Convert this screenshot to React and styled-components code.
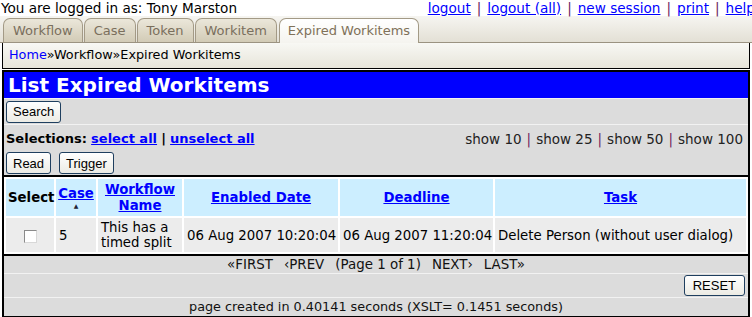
import styled, { createGlobalStyle } from 'styled-components'

const GlobalStyle = createGlobalStyle`
  html, body {
    margin: 0;
    padding: 0;
    background: #ffffff;
  }
  body {
    font-family: "DejaVu Sans", Verdana, sans-serif;
    font-size: 13px;
    color: #000;
  }
`

const topLinks = ['logout', 'logout (all)', 'new session', 'print', 'help']
const tabs = ['Workflow', 'Case', 'Token', 'Workitem', 'Expired Workitems']
const pageSizes = [10, 25, 50, 100]

const columns = [
  { label: 'Case', width: 40, sort: true },
  { label: 'Workflow Name', width: 84, lines: ['Workflow', 'Name'] },
  { label: 'Enabled Date', width: 154 },
  { label: 'Deadline', width: 153 },
  { label: 'Task' }
]

const App = () => {
  return (
    <>
      <GlobalStyle />
      <Page>
        <TopBar>
          <span>You are logged in as: Tony Marston</span>
          <TopLinks>
            {topLinks.map((l, k) => (
              <span key={k}>
                {k > 0 && <Sep>|</Sep>}
                <A href="#">{l}</A>
              </span>
            ))}
          </TopLinks>
        </TopBar>

        <TabBar>
          {tabs.map((t, k) => (
            <Tab key={k} $active={k === tabs.length - 1}>{t}</Tab>
          ))}
        </TabBar>

        <Breadcrumb>
          <A href="#" $plain>Home</A>»Workflow»Expired Workitems
        </Breadcrumb>

        <Panel>
          <Title>List Expired Workitems</Title>

          <Row>
            <Button>Search</Button>
          </Row>

          <Row $between>
            <Selections>
              <b>Selections:</b> <BoldLink href="#">select all</BoldLink> <b>|</b> <BoldLink href="#">unselect all</BoldLink>
            </Selections>
            <ShowLinks>
              {pageSizes.map((n, k) => (
                <span key={k}>
                  {k > 0 && <Sep>|</Sep>}
                  show {n}
                </span>
              ))}
            </ShowLinks>
          </Row>

          <ActionRow>
            <Button>Read</Button>
            <Button>Trigger</Button>
          </ActionRow>

          <Table>
            <colgroup>
              <col style={{ width: 48 }} />
              {columns.map((c, k) => (
                <col key={k} style={c.width ? { width: c.width } : undefined} />
              ))}
            </colgroup>
            <thead>
              <tr>
                <Th>Select</Th>
                {columns.map((c, k) => (
                  <Th key={k}>
                    <HeadLink href="#">
                      {c.lines ? (
                        <>{c.lines[0]}<br />{c.lines[1]}</>
                      ) : c.label}
                    </HeadLink>
                    {c.sort && <SortArrow>▲</SortArrow>}
                  </Th>
                ))}
              </tr>
            </thead>
            <tbody>
              <tr>
                <Td $center><Check type="checkbox" /></Td>
                <Td>5</Td>
                <Td>This has a<br />timed split</Td>
                <Td>06 Aug 2007 10:20:04</Td>
                <Td>06 Aug 2007 11:20:04</Td>
                <Td>Delete Person (without user dialog)</Td>
              </tr>
            </tbody>
          </Table>

          <Pager>
            <span>«FIRST</span>
            <span>‹PREV</span>
            <span>(Page 1 of 1)</span>
            <span>NEXT›</span>
            <span>LAST»</span>
          </Pager>

          <ResetRow>
            <Button $wide $h={21}>RESET</Button>
          </ResetRow>

          <Footer>page created in 0.40141 seconds (XSLT= 0.1451 seconds)</Footer>
        </Panel>
      </Page>
    </>
  )
}

const Page = styled.div`
  width: 752px;
  height: 317px;
  overflow: hidden;
`

const TopBar = styled.div`
  display: flex;
  justify-content: space-between;
  align-items: center;
  height: 16px;
  line-height: 16px;
  font-size: 13.6px;
  padding-left: 1px;
  white-space: nowrap;
`

const TopLinks = styled.div`
  margin-right: -3px;
`

const A = styled.a`
  color: #0000ff;
  text-decoration: ${p => (p.$plain ? 'none' : 'underline')};
`

const Sep = styled.span`
  color: #6b1d5e;
  margin: 0 6px;
`

const TabBar = styled.div`
  display: flex;
  align-items: flex-end;
  height: 25px;
  padding: 1px 0 0 3px;
  background: linear-gradient(#f6f5f1, #e3e0d5);
  border-bottom: 1px solid #9b9381;
  box-sizing: content-box;
`

const Tab = styled.div`
  height: ${p => (p.$active ? '25px' : '24px')};
  line-height: 24px;
  padding: 0 ${p => (p.$active ? '8px' : '9px')};
  margin-right: ${p => (p.$active ? '0' : '1px')};
  margin-left: ${p => (p.$active ? '1px' : '0')};
  margin-bottom: ${p => (p.$active ? '-1px' : '0')};
  font-size: 13px;
  color: ${p => (p.$active ? '#7f7159' : '#7a6f5d')};
  border: 1px solid #a39a86;
  border-bottom: none;
  border-radius: 7px 7px 0 0;
  background: ${p =>
    p.$active
      ? 'linear-gradient(#ffffff, #f5f4ef)'
      : 'linear-gradient(#ebe7da, #d2cbb6)'};
  box-sizing: border-box;
  white-space: nowrap;
`

const Breadcrumb = styled.div`
  height: 26px;
  line-height: 24px;
  margin: 0 2px;
  padding-left: 6px;
  font-size: 12.8px;
  border: 1px solid #000;
  border-top: none;
  background: linear-gradient(#f8f8f4, #e7e5da);
  box-sizing: border-box;
`

const Panel = styled.div`
  margin: 1px 2px 0;
  border: 2px solid #000;
  background: #dcdcdc;
`

const Title = styled.h1`
  margin: 0;
  height: 26px;
  line-height: 26px;
  padding-left: 4px;
  background: #0000ff;
  color: #fff;
  font-size: 20px;
  font-weight: bold;
`

const Row = styled.div`
  display: flex;
  align-items: center;
  justify-content: ${p => (p.$between ? 'space-between' : 'flex-start')};
  height: 26px;
  padding: 0 2px;
  border-top: 1px solid #f2f2f2;
  box-sizing: border-box;
`

const Selections = styled.div`
  font-size: 13px;
  padding-top: 2px;

  b {
    font-weight: bold;
  }
`

const BoldLink = styled.a`
  color: #0000ff;
  font-weight: bold;
  text-decoration: underline;
`

const ShowLinks = styled.div`
  font-size: 13.5px;
  color: #222;
  padding: 2px 3px 0 0;

  ${Sep} {
    margin: 0 5px;
  }
`

const ActionRow = styled.div`
  display: flex;
  gap: 8px;
  height: 25px;
  padding: 2px 2px 0;
  box-sizing: border-box;
`

const Button = styled.button`
  font-family: "Liberation Sans", Arial, sans-serif;
  font-size: 13px;
  color: #000;
  height: ${p => p.$h || 22}px;
  padding: 0 ${p => (p.$wide ? '8px' : '6px')};
  border: 1px solid #1f3f5f;
  border-radius: 3px;
  background: linear-gradient(#ffffff, #ecebe4);
  cursor: pointer;
`

const Table = styled.table`
  width: 100%;
  table-layout: fixed;
  border-collapse: separate;
  border-spacing: 2px;
  background: #fff;
  border-top: 2px solid #000;
  border-bottom: 2px solid #000;
  font-size: 13.3px;
`

const Th = styled.th`
  height: 35px;
  padding: 1px 2px;
  background: #cceeff;
  text-align: center;
  vertical-align: middle;
  font-weight: bold;
  line-height: 16px;

  &:first-child {
    text-align: left;
  }
`

const HeadLink = styled.a`
  color: #0000ff;
  text-decoration: underline;
  font-weight: bold;
`

const SortArrow = styled.div`
  font-size: 6px;
  line-height: 8px;
  color: #223;
`

const Td = styled.td`
  height: 30px;
  padding: 2px 3px;
  background: #ececec;
  line-height: 15px;
  text-align: ${p => (p.$center ? 'center' : 'left')};
  white-space: nowrap;
`

const Check = styled.input`
  appearance: none;
  width: 13px;
  height: 13px;
  margin: 2px 0 0;
  vertical-align: middle;
  border: 1px solid #8a8a8a;
  border-right-color: #d8d8d8;
  border-bottom-color: #d8d8d8;
  background: #fff;
`

const Pager = styled.div`
  display: flex;
  justify-content: center;
  gap: 11px;
  height: 17px;
  line-height: 17px;
  font-size: 13.4px;
  color: #111;
  border-bottom: 1px solid #f2f2f2;
`

const ResetRow = styled.div`
  display: flex;
  justify-content: flex-end;
  align-items: center;
  height: 23px;
  padding: 0 3px;
  border-bottom: 1px solid #f2f2f2;
`

const Footer = styled.div`
  height: 18px;
  line-height: 18px;
  text-align: center;
  font-size: 12.8px;
  color: #111;
`

export default App
